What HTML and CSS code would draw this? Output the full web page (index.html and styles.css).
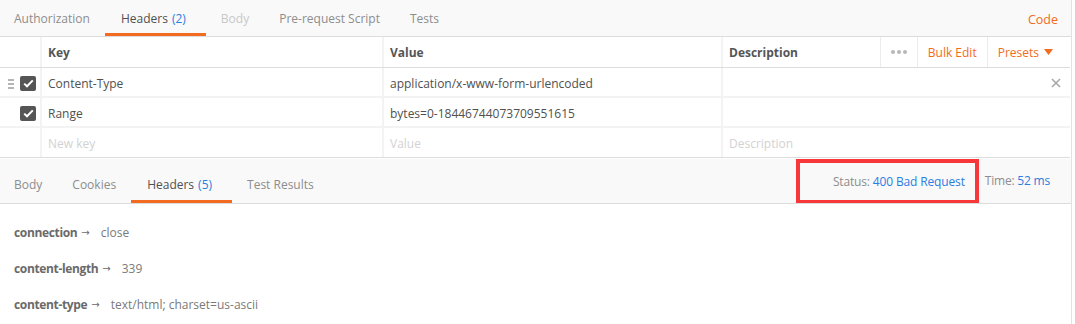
FILE: index.html
```html
<!DOCTYPE html>
<html>
<head>
<meta charset="utf-8">
<link rel="stylesheet" href="styles.css">
</head>
<body>
<div class="page">
  <div class="req-tabs">
    <div class="tab">Authorization</div>
    <div class="tab active">Headers <span class="count">(2)</span></div>
    <div class="tab disabled">Body</div>
    <div class="tab">Pre-request Script</div>
    <div class="tab">Tests</div>
    <div class="spacer"></div>
    <div class="code-link">Code</div>
  </div>

  <div class="kv-table">
    <div class="kv-row head">
      <div class="c-handle"></div>
      <div class="c-key">Key</div>
      <div class="c-val">Value</div>
      <div class="c-desc">
        <span class="desc-title">Description</span>
        <div class="actions">
          <span class="act dots"><i></i><i></i><i></i></span>
          <span class="act link">Bulk Edit</span>
          <span class="act link presets">Presets <svg width="9" height="6" viewBox="0 0 9 6"><path d="M0 0h9L4.5 6z" fill="#f26b21"/></svg></span>
        </div>
      </div>
    </div>
    <div class="kv-row">
      <div class="c-handle">
        <span class="drag"><i></i><i></i><i></i></span>
        <span class="check"><svg width="11" height="9" viewBox="0 0 11 9"><path d="M1.2 4.6 4 7.3 9.8 1.4" fill="none" stroke="#fff" stroke-width="2"/></svg></span>
      </div>
      <div class="c-key">Content-Type</div>
      <div class="c-val">application/x-www-form-urlencoded</div>
      <div class="c-desc"><span class="spacer"></span><svg class="close" width="10" height="10" viewBox="0 0 10 10"><path d="M1 1l8 8M9 1l-8 8" stroke="#a8a8a8" stroke-width="1.6"/></svg></div>
    </div>
    <div class="kv-row">
      <div class="c-handle">
        <span class="check"><svg width="11" height="9" viewBox="0 0 11 9"><path d="M1.2 4.6 4 7.3 9.8 1.4" fill="none" stroke="#fff" stroke-width="2"/></svg></span>
      </div>
      <div class="c-key">Range</div>
      <div class="c-val">bytes=0-18446744073709551615</div>
      <div class="c-desc"></div>
    </div>
    <div class="kv-row placeholder">
      <div class="c-handle"></div>
      <div class="c-key">New key</div>
      <div class="c-val">Value</div>
      <div class="c-desc">Description</div>
    </div>
  </div>

  <div class="resp-tabs">
    <div class="tab">Body</div>
    <div class="tab">Cookies</div>
    <div class="tab active">Headers <span class="count">(5)</span></div>
    <div class="tab">Test Results</div>
    <div class="spacer"></div>
    <div class="status-box">Status: <span class="blue">400 Bad Request</span></div>
    <div class="time">Time: <span class="blue">52 ms</span></div>
  </div>

  <div class="resp-headers">
    <div class="hdr"><b>connection</b><span class="arrow">→</span><span class="v">close</span></div>
    <div class="hdr"><b>content-length</b><span class="arrow">→</span><span class="v">339</span></div>
    <div class="hdr"><b>content-type</b><span class="arrow">→</span><span class="v">text/html; charset=us-ascii</span></div>
  </div>
</div>
</body>
</html>
```

FILE: styles.css
```css
* { box-sizing: border-box; }
html, body { margin: 0; padding: 0; background: #fff; }
body {
  font-family: "Open Sans", "Noto Sans", sans-serif;
  font-size: 12px;
  color: #505050;
  width: 1075px;
  height: 324px;
  overflow: hidden;
}
.page {
  width: 1072px;
  border-right: 1px solid #e2e2e2;
  height: 324px;
}
.req-tabs {
  display: flex;
  align-items: stretch;
  height: 37px;
  background: #f9f9f9;
  border-bottom: 1px solid #dcdcdc;
}
.tab {
  display: flex;
  align-items: center;
  padding: 3px 15px 0;
  color: #8d8d8d;
  border-bottom: 3px solid transparent;
  white-space: nowrap;
}
.tab:first-child { padding-left: 14px; }
.tab.active { color: #505050; border-bottom-color: #f26b21; padding-left: 16px; padding-right: 20px; }
.tab.disabled { color: #c8c8c8; }
.count { color: #2a7de1; margin-left: 4px; }
.spacer { flex: 1; }
.code-link {
  display: flex; align-items: center; padding: 3px 13px 0 0;
  color: #f26b21; font-size: 12.5px;
}

.kv-table { border-bottom: 1px solid #dcdcdc; width: 1070px; }
.kv-row {
  display: grid;
  grid-template-columns: 40px 342px 339px 349px;
  height: 30px;
  border-bottom: 2px solid #f3f3f3;
}
.kv-row.head { border-bottom: 1px solid #dcdcdc; height: 31px; }
.kv-row:last-child { border-bottom: none; height: 29px; }
.kv-row > div {
  display: flex; align-items: center;
  padding-left: 6px;
  white-space: nowrap;
}
.kv-row:not(.head) > div { padding-top: 2px; }
.kv-row > div + div { border-left: 2px solid #f3f3f3; }
.kv-row > .c-handle { padding-left: 0; position: relative; }
.head > div { font-weight: 700; color: #555; }
.head > .c-desc { justify-content: space-between; padding-right: 0; }
.actions { display: flex; height: 100%; align-items: center; font-weight: 400; }
.act { display: flex; align-items: center; height: 100%; padding: 0 10px; border-left: 1px solid #ececec; }
.act.dots { gap: 2px; padding: 0 10px; }
.act.dots i { width: 4px; height: 4px; border-radius: 50%; background: #b8b8b8; display: block; }
.act.link { color: #f26b21; }
.act.presets { gap: 5px; padding-right: 17px; }
.c-handle .drag { position: absolute; left: 8px; top: 11px; display: flex; flex-direction: column; gap: 2px; }
.c-handle .drag i { width: 6px; height: 2px; background: #b5b5b5; display: block; }
.check {
  width: 16px; height: 15px; background: #555; border-radius: 2px;
  display: flex; align-items: center; justify-content: center;
  margin-left: 20px;
}
.c-desc .close { margin-right: 9px; }
.placeholder > div { color: #d2d2d2; }

.resp-tabs {
  display: flex;
  height: 45px;
  background: #f9f9f9;
  border-bottom: 1px solid #dcdcdc;
  margin-top: 1px;
}
.resp-tabs .tab { padding-top: 10px; }
.status-box {
  display: flex; align-items: center; justify-content: flex-end;
  width: 183px;
  border: 4px solid #f7373a;
  border-bottom-width: 3px;
  padding: 0 10px 1px 0;
  color: #8d8d8d;
  white-space: pre;
  letter-spacing: -0.15px;
}
.blue { color: #2a7de1; }
.time { display: flex; align-items: center; padding: 0 21px 1px 6px; color: #8d8d8d; white-space: pre; letter-spacing: -0.2px; }

.resp-headers { padding: 10px 14px 0; }
.hdr { height: 36px; display: flex; align-items: center; white-space: pre; color: #7a7a7a; }
.hdr b { color: #6a6a6a; font-weight: 700; letter-spacing: -0.35px; }
.hdr .arrow { font-family: "DejaVu Sans", sans-serif; margin: 0 11px 0 4px; color: #6a6a6a; font-size: 10px; }
.hdr .v { color: #7a7a7a; }
```
